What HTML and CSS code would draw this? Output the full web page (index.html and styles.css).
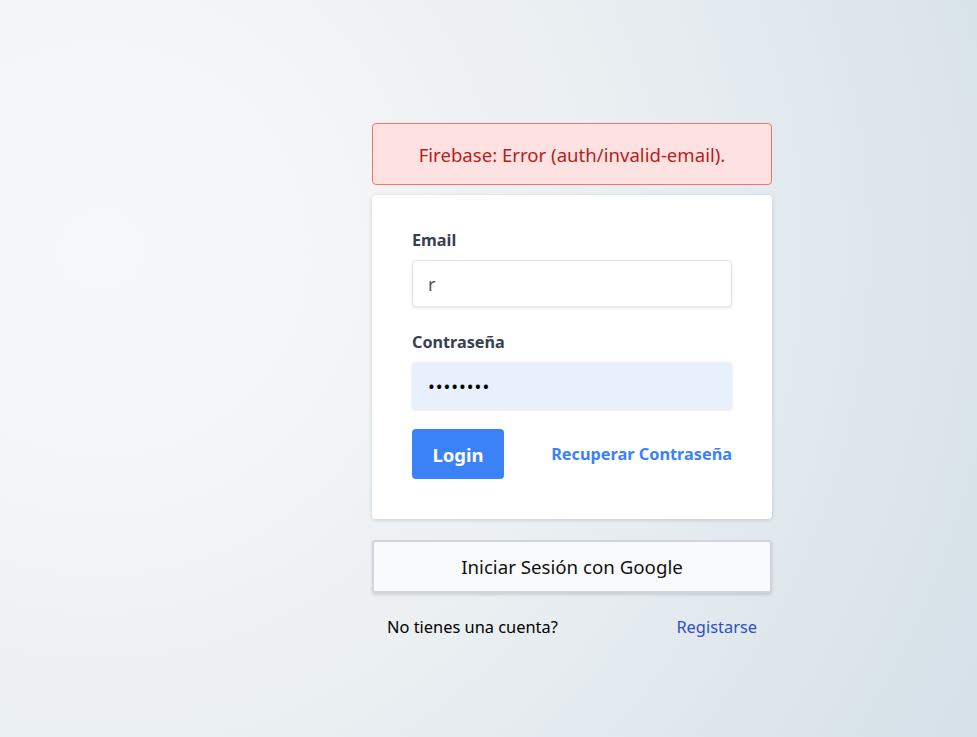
FILE: index.html
```html
<!DOCTYPE html>
<html lang="es">
<head>
<meta charset="utf-8">
<title>Login</title>
<link rel="stylesheet" href="styles.css">
</head>
<body>
<main class="page">
  <div class="auth">
    <div class="alert">Firebase: Error (auth/invalid-email).</div>
    <form class="card">
      <div class="field">
        <label class="label" for="email">Email</label>
        <input class="input" id="email" type="text" value="r">
      </div>
      <div class="field">
        <label class="label" for="pass">Contraseña</label>
        <input class="input input-filled" id="pass" type="password" value="password">
      </div>
      <div class="actions">
        <button class="btn-login" type="button">Login</button>
        <a class="link-recover" href="#">Recuperar Contraseña</a>
      </div>
    </form>
    <button class="btn-google" type="button">Iniciar Sesión con Google</button>
    <div class="register">
      <span class="register-text">No tienes una cuenta?</span>
      <a class="register-link" href="#">Registarse</a>
    </div>
  </div>
</main>
</body>
</html>
```
FILE: styles.css
```css
* { box-sizing: border-box; }
html, body { height: 100%; }
body {
  margin: 0;
  font-family: "Noto Sans", "Open Sans", "Liberation Sans", sans-serif;
  background: radial-gradient(circle at 100px 250px, #f7f8f9 0px, #f3f5f6 250px, #eaeff2 520px, #dfe7ed 780px, #d6e1e9 980px);
  color: #111;
}
.page {
  min-height: 100%;
  padding: 123px 0 0 372px;
}
.auth {
  width: 400px;
}
.alert {
  height: 62px;
  display: flex;
  align-items: center;
  justify-content: center;
  background: #fee2e2;
  border: 1px solid #f87171;
  border-radius: 4px;
  color: #b91c1c;
  font-size: 18.6px;
  margin-bottom: 10px;
}
.card {
  background: #fff;
  border-radius: 4px;
  box-shadow: 0 1px 4px rgba(0,0,0,0.15);
  padding: 34px 40px 40px;
  margin: 0 0 21px;
}
.field { margin-bottom: 24px; }
.field + .field { margin-bottom: 20px; }
.label {
  display: block;
  font-weight: 700;
  font-size: 16.2px;
  color: #374151;
  margin-bottom: 9px;
}
.input {
  display: block;
  width: 100%;
  height: 47px;
  border: 1px solid #e5e7eb;
  border-radius: 4px;
  box-shadow: 0 1px 3px rgba(0,0,0,0.12);
  padding: 0 15px;
  font-family: inherit;
  font-size: 18px;
  color: #555;
  background: #fff;
  outline: none;
}
.input-filled {
  background: #e8f0fe;
  border-color: #e8f0fe;
  color: #000;
  letter-spacing: 1px;
}
.actions {
  display: flex;
  align-items: center;
  justify-content: space-between;
}
.btn-login {
  width: 92px;
  height: 50px;
  border: none;
  border-radius: 4px;
  background: #3b82f6;
  color: #fff;
  font-family: inherit;
  font-weight: 700;
  font-size: 18.5px;
}
.link-recover {
  color: #3b82f6;
  font-weight: 700;
  font-size: 16.3px;
  text-decoration: none;
}
.btn-google {
  display: block;
  width: 400px;
  height: 53px;
  background: #f9fafb;
  border: 2px solid #d1d5db;
  border-radius: 3px;
  box-shadow: 0 2px 3px rgba(0,0,0,0.12);
  font-family: inherit;
  font-size: 18.7px;
  color: #111;
  margin-bottom: 22px;
}
.register {
  display: flex;
  justify-content: space-between;
  padding: 0 15px;
  font-size: 16.4px;
}
.register-text { color: #000; }
.register-link { color: #2f4fc1; text-decoration: none; }
```
